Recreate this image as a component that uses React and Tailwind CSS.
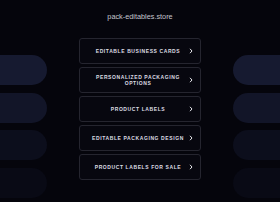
const links = [
  ['EDITABLE BUSINESS CARDS'],
  ['PERSONALIZED PACKAGING', 'OPTIONS'],
  ['PRODUCT LABELS'],
  ['EDITABLE PACKAGING DESIGN'],
  ['PRODUCT LABELS FOR SALE'],
];

const pills = ['bg-[#161a30]', 'bg-[#121528]', 'bg-[#0c0e1c]', 'bg-[#090a15]'];

function Chevron() {
  return (
    <svg width="4" height="6" viewBox="0 0 4 6" className="shrink-0">
      <path d="M1 0.8 L3 3 L1 5.2" fill="none" stroke="#e5e5ea" strokeWidth="1" />
    </svg>
  );
}

export default function App() {
  return (
    <div
      className="w-[280px] h-[202px] overflow-hidden bg-[#05050c] flex flex-col"
      style={{ fontFamily: '"Liberation Sans", Arial, sans-serif' }}
    >
      <div className="h-[38px] pt-[12px] text-center text-[7.3px] leading-[9px] text-[#c4c4cc]">
        pack-editables.store
      </div>
      <div className="flex items-start">
        <div className="w-[47px] mt-[17px] flex flex-col gap-[7.5px]">
          {pills.map((c, i) => (
            <div key={i} className={`h-[30px] rounded-r-full ${c}`} />
          ))}
        </div>
        <div className="w-[122px] mx-[32px] flex flex-col gap-[3px]">
          {links.map((lines) => (
            <div
              key={lines[0]}
              className="h-[26px] rounded-[3px] border border-[#25252f] bg-[#07070f] flex items-center px-[7px]"
            >
              <div className="flex-1 text-center text-[5px] leading-[6.5px] font-bold tracking-[0.12em] text-[#dcdce2]">
                {lines.map((l) => (
                  <div key={l}>{l}</div>
                ))}
              </div>
              <Chevron />
            </div>
          ))}
        </div>
        <div className="w-[47px] mt-[17px] flex flex-col gap-[7.5px]">
          {pills.map((c, i) => (
            <div key={i} className={`h-[30px] rounded-l-full ${c}`} />
          ))}
        </div>
      </div>
    </div>
  );
}
